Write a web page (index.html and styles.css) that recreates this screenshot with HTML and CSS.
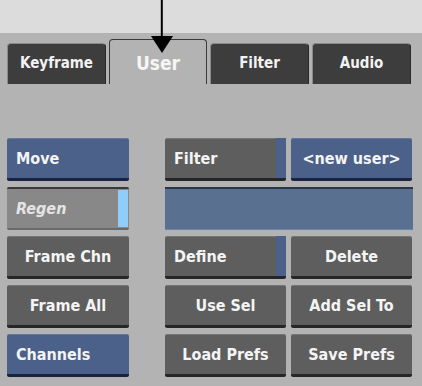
FILE: index.html
```html
<!DOCTYPE html>
<html>
<head>
<meta charset="utf-8">
<link rel="stylesheet" href="styles.css">
</head>
<body>
<div class="topbar"></div>
<div class="panel">
  <div class="tabs">
    <div class="tab">Keyframe</div>
    <div class="tab active">User</div>
    <div class="tab">Filter</div>
    <div class="tab">Audio</div>
  </div>
  <div class="grid">
    <div class="btn blue left c1">Move</div>
    <div class="btn strip left c2">Filter</div>
    <div class="btn blue c3">&lt;new user&gt;</div>

    <div class="btn regen left c1">Regen</div>
    <div class="field"></div>

    <div class="btn c1">Frame Chn</div>
    <div class="btn strip left c2">Define</div>
    <div class="btn c3">Delete</div>

    <div class="btn c1">Frame All</div>
    <div class="btn c2">Use Sel</div>
    <div class="btn c3">Add Sel To</div>

    <div class="btn blue left c1">Channels</div>
    <div class="btn c2">Load Prefs</div>
    <div class="btn c3">Save Prefs</div>
  </div>
</div>
<div class="arrow">
  <svg width="24" height="54" viewBox="0 0 24 54">
    <rect x="10.8" y="0" width="2" height="40" fill="#000"/>
    <polygon points="1,36 23,36 12,53" fill="#000"/>
  </svg>
</div>
</body>
</html>
```
FILE: styles.css
```css
html, body {
  margin: 0;
  padding: 0;
}
body {
  width: 422px;
  height: 386px;
  background: #b3b3b3;
  font-family: "DejaVu Sans", sans-serif;
  font-stretch: condensed;
  overflow: hidden;
  position: relative;
}
.topbar {
  height: 33px;
  background: #dcdcdc;
}
.panel {
  padding: 6px 0 0 7px;
}
.tabs {
  display: flex;
  align-items: flex-end;
  gap: 3px;
  height: 45px;
}
.tab {
  box-sizing: border-box;
  width: 99px;
  height: 41px;
  background: #3d3d3d;
  border-top: 1px solid #8a8a8a;
  border-left: 1px solid #8a8a8a;
  border-right: 1px solid #2a2a2a;
  border-radius: 4px 4px 0 0;
  color: #f2f2f2;
  font-weight: bold;
  font-size: 15px;
  display: flex;
  align-items: center;
  justify-content: center;
  padding-bottom: 2px;
}
.tab.active {
  width: 98px;
  height: 45px;
  background: #b3b3b3;
  border: 1px solid #3a3a3a;
  border-bottom: none;
  color: #f6f6f6;
  font-size: 19px;
  padding-bottom: 0;
  padding-top: 2px;
}
.grid {
  margin-top: 54px;
  display: grid;
  grid-template-columns: 122px 26px 121px 121px;
  grid-auto-rows: 43px;
  column-gap: 5px;
  row-gap: 6px;
}
.c1 { grid-column: 1; }
.c2 { grid-column: 3; }
.c3 { grid-column: 4; }
.btn {
  box-sizing: border-box;
  background: #5e5e5e;
  border-top: 1px solid #757575;
  border-bottom: 3px solid #262626;
  border-radius: 2px;
  color: #f4f4f4;
  font-size: 16px;
  font-weight: bold;
  display: flex;
  align-items: center;
  justify-content: center;
  position: relative;
}
.left {
  justify-content: flex-start;
  padding-left: 9px;
}
.blue {
  background: #4b6189;
  border-top-color: #5f78a2;
  border-bottom-color: #1b2340;
}
.strip::after {
  content: "";
  position: absolute;
  right: 0;
  top: -1px;
  bottom: 0;
  width: 10px;
  background: #4b6189;
}
.regen {
  background: #888888;
  border-top: 2px solid #3a3a3a;
  border-bottom: 2px solid #6a6a6a;
  color: #e4e4e4;
  font-style: italic;
}
.regen::after {
  content: "";
  position: absolute;
  right: 1px;
  top: 1px;
  bottom: 1px;
  width: 10px;
  background: #8fcdfb;
}
.field {
  grid-column: 3 / 5;
  margin-right: -1px;
  box-sizing: border-box;
  background: #5a7091;
  border-top: 2px solid #2d3646;
  border-bottom: 1px solid #6f83a0;
}
.arrow {
  position: absolute;
  left: 150px;
  top: 0;
  line-height: 0;
}
```
